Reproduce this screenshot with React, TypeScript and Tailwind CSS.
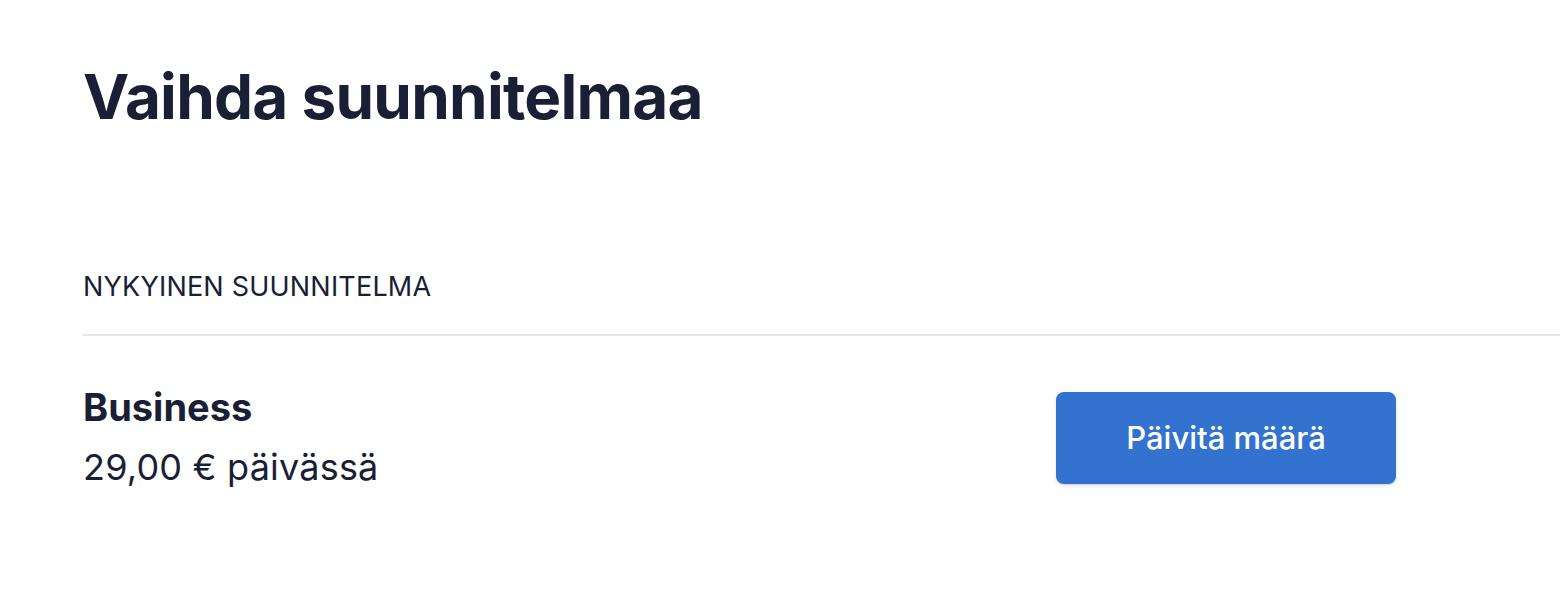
import React from 'react';

// Plan switch header of a billing portal
export default function App() {
  return (
    <div
      className="min-h-[602px] w-full bg-white pl-[83px] text-[#1a1f36]"
      style={{ fontFamily: 'Inter, "Noto Sans", sans-serif' }}
    >
      <h1 className="pt-[59px] text-[62px] font-bold leading-[75px] tracking-[-0.75px]">
        Vaihda suunnitelmaa
      </h1>

      <section className="mt-[136px]">
        <h2 className="pb-[31px] text-[27px] font-normal leading-[33px] tracking-[0.2px]">
          NYKYINEN SUUNNITELMA
        </h2>
        <div className="h-[2px] w-full bg-[#e3e8ee]" />

        <div className="flex items-start justify-between pr-[164px] pt-[48px]">
          <div className="flex flex-col">
            <span className="text-[38px] font-bold leading-[46px]">Business</span>
            <span className="mt-[14px] text-[36px] leading-[46px] tracking-[0.2px]">29,00 € päivässä</span>
          </div>
          <button className="mt-[8px] flex h-[92px] w-[340px] items-center justify-center rounded-[8px] bg-[#3373cf] text-[31px] font-medium text-white shadow-[0_2px_5px_rgba(60,66,87,0.12),0_1px_1px_rgba(0,0,0,0.12)]">
            Päivitä määrä
          </button>
        </div>
      </section>
    </div>
  );
}
